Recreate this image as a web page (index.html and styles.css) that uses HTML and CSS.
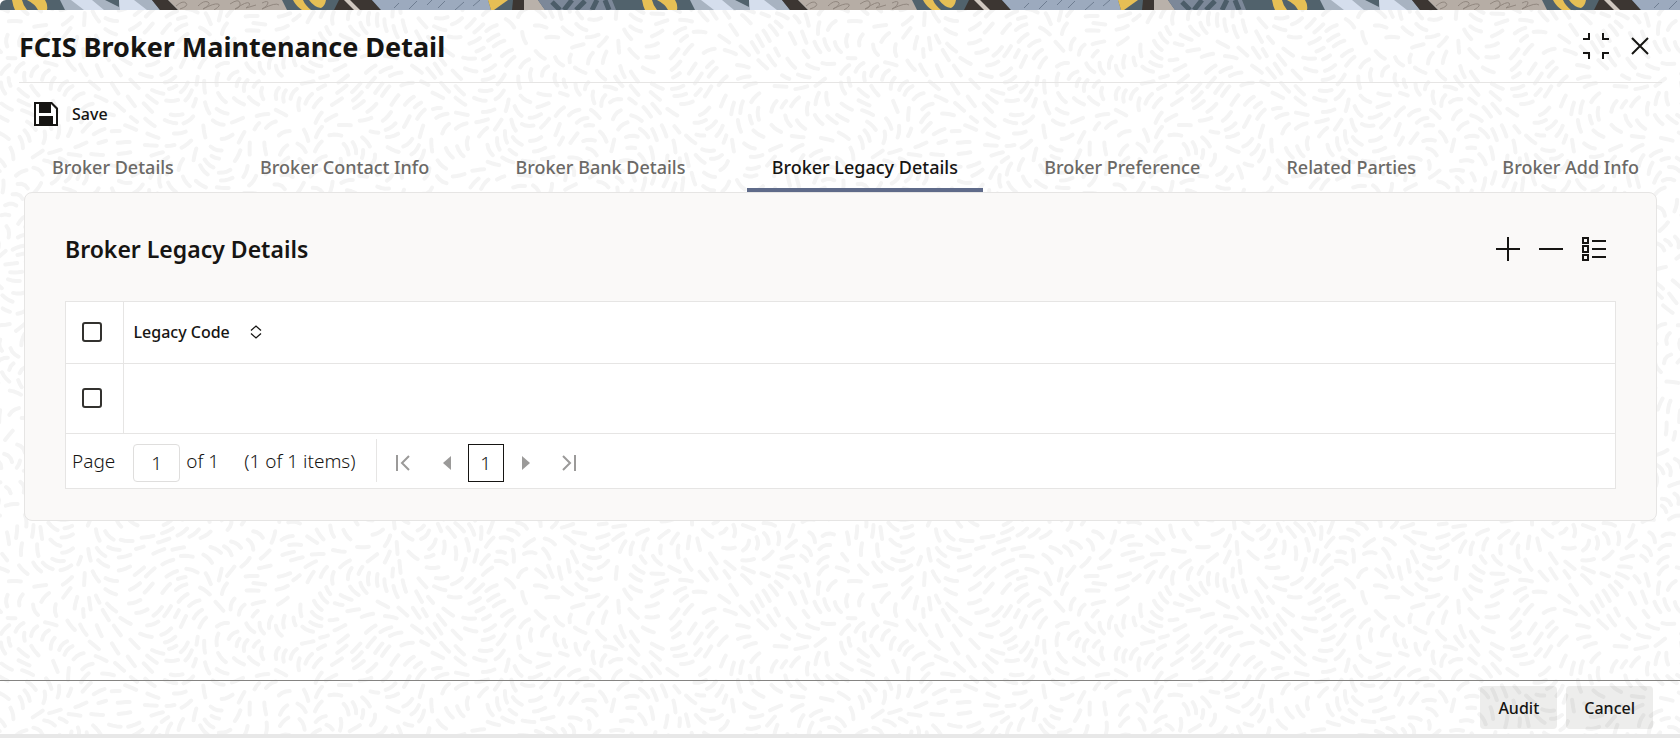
FILE: index.html
```html
<!DOCTYPE html>
<html lang="en">
<head>
    <meta charset="UTF-8">
    <meta name="viewport" content="width=device-width, initial-scale=1.0">
    <title>FCIS Broker Maintenance Detail</title>
    <link rel="stylesheet" href="styles.css">
</head>
<body>
    <svg class="banner" aria-hidden="true">
        <defs>
            <pattern id="banner-art" width="630" height="10" patternUnits="userSpaceOnUse">
                <rect width="630" height="10" fill="#51626c"/>
                <path d="M12 0H22Q23 5 27 10H15Q13 6 12 0ZM27 0H45Q48 5 47 10H38Q35 4 27 0Z" fill="#e6bf55"/>
                <path d="M60 0H152L160 10H65Z" fill="#a8b3c1"/>
                <path d="M71 0H92L104 10H84ZM119 0H134L147 10H120Z" fill="#d5deed"/>
                <path d="M105 0H119V7Z" fill="#51626c"/>
                <path d="M152 0H168L178 10H160Z" fill="#3c3632"/>
                <path d="M168 0H282L287 10H178Z" fill="#b6ada5"/>
                <path d="M176 6Q183 0 186 3T180 9M198 6Q204 0 208 2T203 9Q214 3 218 4T214 10M230 4Q239 -2 240 3T235 9Q247 1 249 3T246 8L256 5M262 3Q268 0 268 3T262 9Q276 2 279 5" fill="none" stroke="#91877f"/>
                <path d="M293 0H303Q305 5 311 10H302Q296 6 293 0ZM309 0H326Q325 6 321 8Q314 7 309 0Z" fill="#e6bf55"/>
                <path d="M339 0H372L381 10H334Z" fill="#3c3632"/>
                <path d="M344 0H350L360 10H354Z" fill="#d0c8c0"/>
                <path d="M372 0H488L491 10H381Z" fill="#9caabe"/>
                <path d="M394 8L399 3M409 9L417 1M427 5L432 0M438 8L445 1M455 10L464 2M473 6L480 0" stroke="#6f7e92"/>
                <path d="M488 0H508L494 10H491Z" fill="#e6bf55"/>
                <path d="M513 0H524V10H512Z" fill="#3c3632"/>
                <path d="M524 0H538L545 10H524Z" fill="#b9b1aa"/>
                <path d="M538 0H612L616 10H545Z" fill="#7c8899"/>
                <path d="M552 2L560 10M572 0L564 10M585 1L576 10M597 0L592 10M605 0L609 10" stroke="#4c5d69" stroke-width="5"/>
            </pattern>
        </defs>
        <rect width="100%" height="10" fill="url(#banner-art)"/>
    </svg>

    <header class="page-header">
        <h1>FCIS Broker Maintenance Detail</h1>
        <div class="window-buttons">
            <button type="button" class="icon-button" aria-label="Restore">
                <svg width="26" height="26" viewBox="0 0 26 26" fill="none" stroke="#161513" stroke-width="2"><path d="M0 6H6V0M20 0V6H26M0 20H6V26M26 20H20V26"/></svg>
            </button>
            <button type="button" class="icon-button" aria-label="Close">
                <svg width="18" height="18" viewBox="0 0 18 18" fill="none" stroke="#161513" stroke-width="2"><path d="M1 1L17 17M17 1L1 17"/></svg>
            </button>
        </div>
    </header>

    <div class="toolbar">
        <button type="button" class="save-button">
            <svg width="24" height="24" viewBox="0 0 24 24"><path fill="#161513" fill-rule="evenodd" d="M0 0H18L24 6V24H0ZM2 2V22H5V14H19V22H22V7L17 2V11H5V2Z"/><path fill="#161513" d="M5 2H14V10H5Z"/></svg>
            Save
        </button>
    </div>

    <div class="tabs" role="tablist">
        <button type="button" role="tab">Broker Details</button>
        <button type="button" role="tab">Broker Contact Info</button>
        <button type="button" role="tab">Broker Bank Details</button>
        <button type="button" role="tab" class="active" aria-selected="true">Broker Legacy Details</button>
        <button type="button" role="tab">Broker Preference</button>
        <button type="button" role="tab">Related Parties</button>
        <button type="button" role="tab">Broker Add Info</button>
    </div>

    <main class="panel">
        <div class="panel-header">
            <h2>Broker Legacy Details</h2>
            <div class="panel-actions">
                <button type="button" class="icon-button" aria-label="Add row">
                    <svg width="24" height="24" viewBox="0 0 24 24" stroke="#161513" stroke-width="2"><path d="M12 0V24M0 12H24"/></svg>
                </button>
                <button type="button" class="icon-button" aria-label="Remove row">
                    <svg width="24" height="24" viewBox="0 0 24 24" stroke="#161513" stroke-width="2"><path d="M0 12H24"/></svg>
                </button>
                <button type="button" class="icon-button" aria-label="Single record view">
                    <svg width="24" height="24" viewBox="0 0 24 24" fill="none" stroke="#161513" stroke-width="2"><path d="M1 1H6V6H1ZM1 9H6V15H1ZM1 18H6V23H1ZM10 4H24M10 12H24M10 20H24"/></svg>
                </button>
            </div>
        </div>

        <div class="grid">
            <table>
                <thead>
                    <tr>
                        <th class="select"><input type="checkbox" aria-label="Select all"></th>
                        <th>
                            <span class="column-title">Legacy Code
                                <svg width="12" height="14" viewBox="0 0 12 14" fill="none" stroke="#161513" stroke-width="1.3"><path d="M1 5.500L6 1L11 5.500M1 8.500L6 13L11 8.500"/></svg>
                            </span>
                        </th>
                    </tr>
                </thead>
                <tbody>
                    <tr>
                        <td class="select"><input type="checkbox" aria-label="Select row"></td>
                        <td></td>
                    </tr>
                </tbody>
            </table>

            <div class="pagination">
                <label for="page">Page</label>
                <input type="text" id="page" value="1">
                <span>of 1</span>
                <span class="items">(1 of 1 items)</span>
                <div class="page-buttons">
                    <button type="button" aria-label="First page">
                        <svg width="14" height="16" viewBox="0 0 14 16" fill="none" stroke="#9b9a99" stroke-width="2"><path d="M1 0V16M13 1L6 8L13 15"/></svg>
                    </button>
                    <button type="button" aria-label="Previous page">
                        <svg width="8" height="14" viewBox="0 0 8 14" fill="#9b9a99"><path d="M8 0V14L0 7Z"/></svg>
                    </button>
                    <button type="button" class="current">1</button>
                    <button type="button" aria-label="Next page">
                        <svg width="8" height="14" viewBox="0 0 8 14" fill="#9b9a99"><path d="M0 0V14L8 7Z"/></svg>
                    </button>
                    <button type="button" aria-label="Last page">
                        <svg width="14" height="16" viewBox="0 0 14 16" fill="none" stroke="#9b9a99" stroke-width="2"><path d="M13 0V16M1 1L8 8L1 15"/></svg>
                    </button>
                </div>
            </div>
        </div>
    </main>

    <footer class="footer">
        <button type="button">Audit</button>
        <button type="button">Cancel</button>
    </footer>

    <script src="texture.js"></script>
</body>
</html>
```
FILE: styles.css
```css
* {
    box-sizing: border-box;
}
body {
    display: flex;
    flex-direction: column;
    min-height: 100vh;
    margin: 0;
    background-color: #fff;
    border-bottom: 4px solid #e8e8e8;
    color: #161513;
    font-family: 'Noto Sans', 'Open Sans', sans-serif;
    font-size: 16px;
}
button {
    padding: 0;
    border: none;
    background: none;
    color: inherit;
    font: inherit;
    cursor: pointer;
}
svg {
    display: block;
}
.banner {
    width: 100%;
    height: 10px;
    border-top-left-radius: 6px;
}
.page-header {
    display: flex;
    align-items: center;
    justify-content: space-between;
    height: 73px;
    margin: 0 18px 0 19px;
    padding-right: 13px;
    border-bottom: 1px solid #e6e5e4;
}
h1 {
    margin: 0;
    font-size: 27px;
    font-weight: 700;
}
.window-buttons {
    display: flex;
    align-items: center;
    gap: 22px;
}
.toolbar {
    padding: 17px 34px;
}
.save-button {
    display: flex;
    align-items: center;
    gap: 14px;
    height: 28px;
    font-weight: 500;
}
.tabs {
    display: flex;
    justify-content: space-between;
    margin: 0 16px 0 27px;
}
.tabs button {
    height: 47px;
    padding: 0 25px;
    border-bottom: 4px solid transparent;
    color: #6b6966;
    font-size: 18px;
    font-weight: 500;
    white-space: nowrap;
}
.tabs .active {
    border-bottom-color: #5f6b8a;
    color: #161513;
}
.panel {
    margin: 0 23px 0 24px;
    padding: 30px 40px 31px;
    background: #faf9f8;
    border: 1px solid #e6e5e4;
    border-radius: 8px;
}
.panel-header {
    display: flex;
    align-items: center;
    justify-content: space-between;
    height: 52px;
    margin-bottom: 26px;
    padding-right: 10px;
}
h2 {
    margin: 0;
    font-size: 23px;
    font-weight: 600;
}
.panel-actions {
    display: flex;
    gap: 19px;
}
.grid {
    background: #fff;
    border: 1px solid #e6e5e4;
}
table {
    width: 100%;
    border-collapse: collapse;
}
th,
td {
    height: 61px;
    padding: 0 10px;
    border-bottom: 1px solid #e6e5e4;
    font-weight: 500;
    text-align: left;
}
td {
    height: 70px;
}
.select {
    width: 57px;
    padding: 0 0 0 16px;
    border-right: 1px solid #e6e5e4;
}
.select input {
    display: block;
    appearance: none;
    width: 20px;
    height: 20px;
    margin: 0;
    background: #fff;
    border: 2px solid #33322f;
    border-radius: 3px;
}
.column-title {
    display: flex;
    align-items: center;
    gap: 20px;
}
.pagination {
    display: flex;
    align-items: center;
    height: 54px;
    padding: 0 6px;
    font-size: 19px;
    font-weight: 300;
}
.pagination input {
    width: 47px;
    height: 38px;
    margin: 4px 6px 0 18px;
    border: 1px solid #dfdedd;
    border-radius: 4px;
    background: #fff;
    color: #161513;
    font: inherit;
    text-align: center;
}
.items {
    margin-left: 25px;
}
.page-buttons {
    display: flex;
    align-items: center;
    height: 43px;
    margin-left: 20px;
    padding: 4px 19px 0;
    border-left: 1px solid #e6e5e4;
}
.page-buttons .current {
    width: 36px;
    height: 38px;
    margin: 0 18px 0 17px;
    border: 1px solid #161513;
}
.page-buttons button:first-child {
    margin-right: 33px;
}
.page-buttons button:last-child {
    margin-left: 32px;
}
.footer {
    display: flex;
    justify-content: flex-end;
    gap: 9px;
    margin-top: auto;
    padding: 5px 27px;
    border-top: 1px solid #858482;
}
.footer button {
    height: 43px;
    padding: 0 18px;
    background: rgba(22, 21, 19, 0.08);
    border-radius: 4px;
    font-weight: 500;
}
```
FILE: texture.js
```javascript
// Page background: short strokes following a swirling field, as one repeating tile
const WIDTH = 840;
const HEIGHT = 560;
const SPACING = 7;
let seed = 7;

function random() {
    seed = (seed * 16807) % 2147483647;
    return seed / 2147483647;
}

function angleAt(x, y) {
    const u = x / WIDTH * Math.PI * 2;
    const v = y / HEIGHT * Math.PI * 2;
    return 2 * Math.sin(3 * u + Math.cos(2 * v)) + 2 * Math.cos(2 * v + Math.sin(3 * u)) + Math.sin(5 * u - 3 * v);
}

function isFree(point, taken) {
    return taken.every(other => {
        let dx = Math.abs(point[0] - other[0]) % WIDTH;
        let dy = Math.abs(point[1] - other[1]) % HEIGHT;
        dx = Math.min(dx, WIDTH - dx);
        dy = Math.min(dy, HEIGHT - dy);
        return dx * dx + dy * dy > SPACING * SPACING;
    });
}

function drawTexture() {
    const taken = [];
    let d = '';

    for (let i = 0; i < 40000; i++) {
        let x = random() * WIDTH;
        let y = random() * HEIGHT;
        const steps = i < 20000 ? 3 : 2;
        const points = [[x, y]];
        for (let s = 0; s < steps; s++) {
            const a = angleAt(x, y);
            x += Math.cos(a) * 4;
            y += Math.sin(a) * 4;
            points.push([x, y]);
        }
        if (!points.every(p => isFree(p, taken))) continue;
        taken.push(...points);

        // repeat strokes that cross an edge so that the tile joins up
        for (const ox of [-WIDTH, 0, WIDTH]) {
            for (const oy of [-HEIGHT, 0, HEIGHT]) {
                const moved = points.map(p => [p[0] + ox, p[1] + oy]);
                if (moved.some(p => p[0] > -4 && p[0] < WIDTH + 4 && p[1] > -4 && p[1] < HEIGHT + 4)) {
                    d += 'M' + moved.map(p => p[0].toFixed(1) + ' ' + p[1].toFixed(1)).join('L');
                }
            }
        }
    }

    const svg = `<svg xmlns="http://www.w3.org/2000/svg" width="${WIDTH}" height="${HEIGHT}">
        <path d="${d}" fill="none" stroke="#f4f4f4" stroke-width="4" stroke-linecap="round" stroke-linejoin="round"/>
    </svg>`;
    document.body.style.backgroundImage = `url("data:image/svg+xml,${encodeURIComponent(svg)}")`;
}

drawTexture();
```
